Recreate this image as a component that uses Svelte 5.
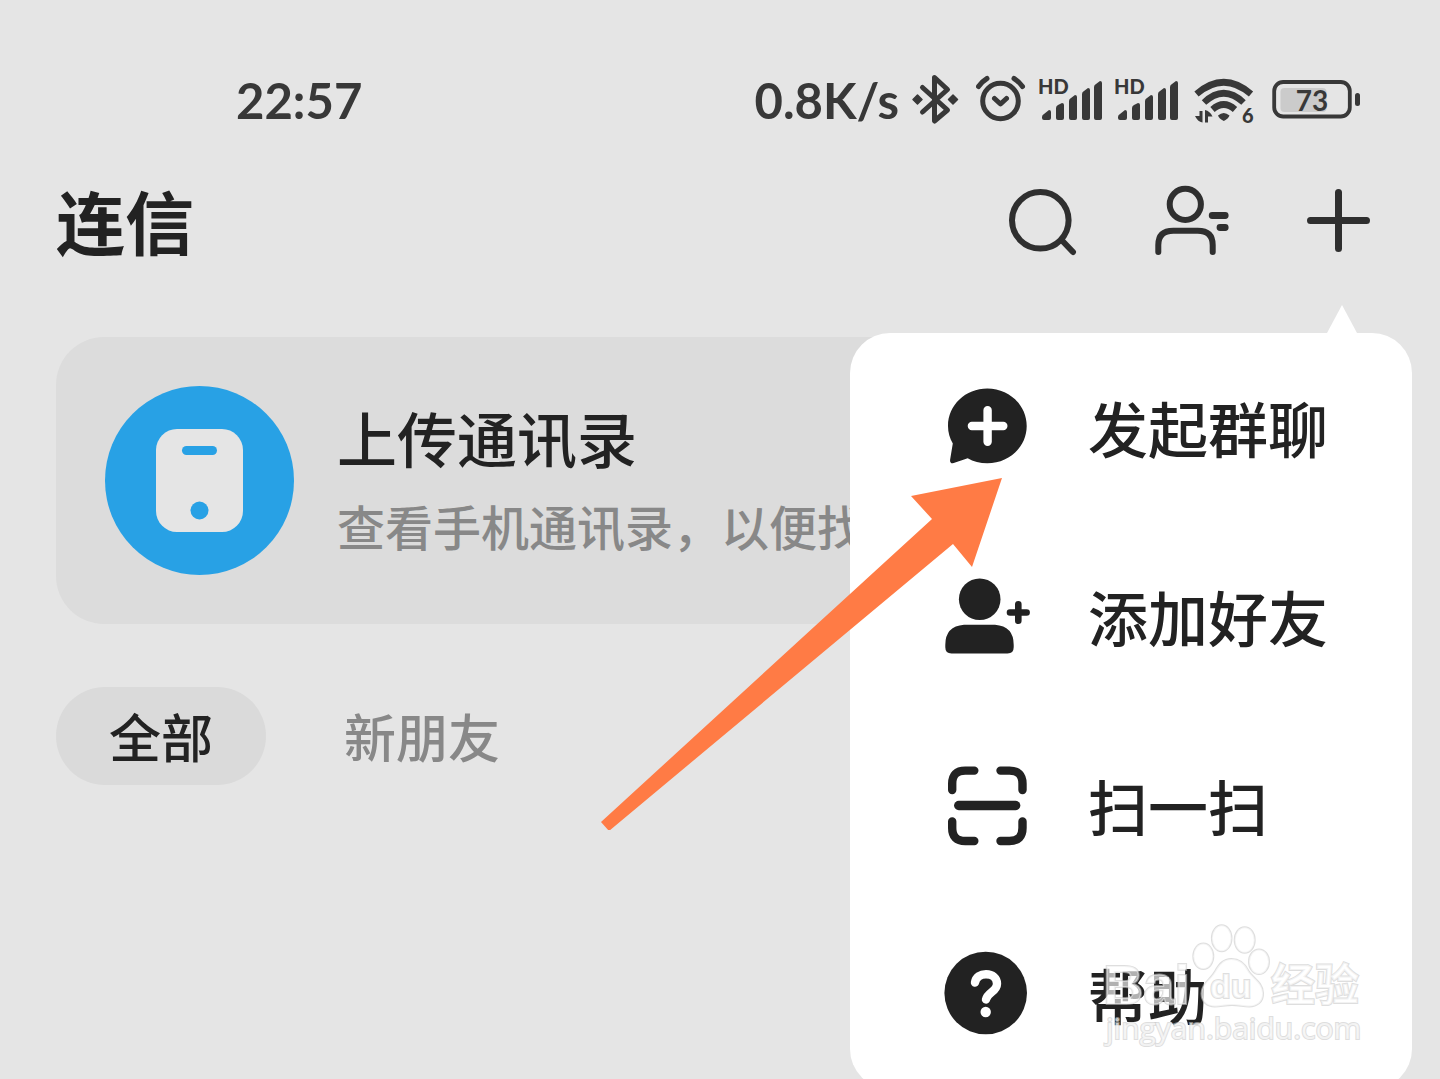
<script>
    let activeTab = $state("all");

    const tabs = [
        { id: "all", label: "全部" },
        { id: "new", label: "新朋友" },
    ];

    const menuItems = [
        { id: "group", label: "发起群聊" },
        { id: "friend", label: "添加好友" },
        { id: "scan", label: "扫一扫" },
        { id: "help", label: "帮助" },
    ];
</script>

{#snippet signal()}
    <svg width="64" height="56" viewBox="0 0 64 56" aria-hidden="true">
        <text class="hd" x="-1" y="22">HD</text>
        <g class="solid">
            <path d="M3 45q0-2 2-3l5-4q2 0 2 2v6q0 2-2 2H5q-2 0-2-2z" />
            <path d="M17 36q0-2 2-3l4-2q2 0 2 2v13q0 2-2 2h-4q-2 0-2-2z" />
            <path d="M30 29q0-2 2-3l4-3q2 0 2 2v21q0 2-2 2h-4q-2 0-2-2z" />
            <path d="M43 22q0-2 2-3l4-3q2 0 2 2v28q0 2-2 2h-4q-2 0-2-2z" />
            <path d="M55 15q0-2 2-3l4-3q2 0 2 2v35q0 2-2 2h-4q-2 0-2-2z" />
        </g>
    </svg>
{/snippet}

<div class="page">
    <div class="status-bar">
        <span class="time">22:57</span>
        <div class="indicators">
            <span>0.8K/s</span>
            <svg width="53" height="56" viewBox="0 0 53 56" aria-hidden="true">
                <path class="line" stroke-width="5" d="M11.5 15.5 36.5 38 23.5 49V5.500L36.500 17.500 11.500 40" />
                <path class="solid" d="M6.500 23 11 27.500 6.500 32 2 27.500zM42 23l4.500 4.500L42 32l-4.500-4.500z" stroke="#383838" stroke-width="1.500" stroke-linejoin="round" />
            </svg>
            <svg width="51" height="56" viewBox="0 0 51 56" aria-hidden="true">
                <circle class="line" cx="24.500" cy="29" r="17.800" stroke-width="5" />
                <path class="line" stroke-width="5" d="m18.500 26.500 6 5.500 6-5.500M2.500 14.500Q6 9.500 11 6.500M38 6.500q5 3 8.500 8" />
            </svg>
            {@render signal()}
            {@render signal()}
            <svg width="65" height="56" viewBox="0 0 65 56" aria-hidden="true">
                <g class="line wifi" stroke-width="6.500">
                    <path d="M5.500 22Q32.700-1.500 60 22" />
                    <path d="M13 30.500Q32.700 12 52.500 30.500" />
                    <path d="M21.500 37.500Q32.700 27.500 44 37.500" />
                </g>
                <path class="solid" d="M27 43.500q5.700-5 11.500 0-1 3-5.700 5.500-4.800-2.500-5.800-5.500z" />
                <path class="solid" d="M8.500 39h3v11.500q-5-1-7.500-6.500h4.500zM14 50.500V38q5 1 7.500 6.500H17v6z" />
                <text class="wifi-gen" x="51" y="51">6</text>
            </svg>
            <svg width="92" height="56" viewBox="0 0 92 56" aria-hidden="true">
                <rect x="12.500" y="16" width="46" height="24" rx="4" fill="#cbcbcb" />
                <rect class="line" x="6.200" y="10" width="75.600" height="34.500" rx="9" stroke-width="3.800" />
                <rect class="solid" x="87" y="21" width="5" height="13" rx="2.500" />
                <text class="battery" x="44" y="38.500">73</text>
            </svg>
        </div>
    </div>

    <header>
        <h1>连信</h1>
        <nav>
            <button aria-label="搜索">
                <svg width="80" height="80" viewBox="0 0 80 80">
                    <g class="tool" stroke-width="6">
                        <circle cx="38.300" cy="38.300" r="28.300" />
                        <path d="m60 58.500 11 11.500" />
                    </g>
                </svg>
            </button>
            <button aria-label="联系人">
                <svg width="80" height="80" viewBox="0 0 80 80">
                    <g class="tool" stroke-width="6">
                        <circle cx="35.300" cy="22.300" r="15.600" />
                        <path d="M8.300 70v-7q0-14.300 15-14.300h24.400q15 0 15 14.300v7" />
                        <path stroke-width="6.800" d="M62.200 33.500h13M70 45.500h5.200" />
                    </g>
                </svg>
            </button>
            <button aria-label="更多">
                <svg width="80" height="80" viewBox="0 0 80 80">
                    <path class="tool" stroke-width="7" d="M12.500 38.500h56M40.500 10.500v56" />
                </svg>
            </button>
        </nav>
    </header>

    <main>
        <section class="card">
            <svg width="189" height="189" viewBox="0 0 189 189" aria-hidden="true">
                <circle cx="94.500" cy="94.500" r="94.500" fill="#28a1e5" />
                <rect x="51" y="43" width="87" height="103" rx="21" fill="#e5e5e5" />
                <rect x="77" y="60" width="35" height="9" rx="4.500" fill="#28a1e5" />
                <circle cx="94.500" cy="124.500" r="9" fill="#28a1e5" />
            </svg>
            <div class="card-text">
                <h2>上传通讯录</h2>
                <p>查看手机通讯录，以便找</p>
            </div>
        </section>

        <div class="tabs">
            {#each tabs as tab (tab.id)}
                <button class:active={activeTab === tab.id} onclick={() => (activeTab = tab.id)}>
                    {tab.label}
                </button>
            {/each}
        </div>
    </main>

    <div class="menu">
        {#each menuItems as item (item.id)}
            <button>
                <svg width="88" height="88" viewBox="0 0 88 88" aria-hidden="true">
                    {#if item.id === "group"}
                        <path fill="#222" d="M44.300 5.500C66 5.500 83.700 22 83.700 43S66 80.300 44.300 80.300c-7.300 0-14-1.800-19.600-5l-14 4.800q-4 .8-3.600-3.400L9.800 60.500C6.800 55.500 5 49.500 5 43 5 22 22.600 5.500 44.300 5.500z" />
                        <path stroke="#fff" stroke-width="8.400" stroke-linecap="round" d="M28.900 43h31.400M44.600 27.300v31.400" />
                    {:else if item.id === "friend"}
                        <circle fill="#222" cx="36.700" cy="27.200" r="20.800" />
                        <path fill="#222" d="M21 52.800h31q18.700 1.500 18.700 20v2.500q0 6.200-6.200 6.200h-56q-6.200 0-6.200-6.200v-2.500q0-18.500 18.700-20z" />
                        <path stroke="#222" stroke-width="6.600" stroke-linecap="round" d="M67 40.500h16.600M75.300 32.200v16.600" />
                    {:else if item.id === "scan"}
                        <g fill="none" stroke="#222" stroke-width="8.400" stroke-linecap="round">
                            <path d="M31.300 9.600h-9.100Q9.200 9.600 9.200 22.600v6.500M57.500 9.600h9q13 0 13 13v6.500M9.200 60.500V67q0 13 13 13h9.100M57.500 80h9q13 0 13-13v-6.500" />
                            <path stroke-width="9.500" d="M15.800 44.500h56.800" />
                        </g>
                    {:else}
                        <circle fill="#222" cx="42.700" cy="43" r="41.300" />
                        <path fill="none" stroke="#fff" stroke-width="8.400" stroke-linecap="round" d="M32 32.500c1-5.500 5.500-8.300 11-8.300 6.500 0 11 3.800 11 9.500 0 8-9.500 8.500-11 15.800" />
                        <circle fill="#fff" cx="42.700" cy="62" r="5.200" />
                    {/if}
                </svg>
                <span>{item.label}</span>
            </button>
        {/each}
    </div>

    <svg class="arrow" width="402" height="354" viewBox="0 0 402 354" aria-hidden="true">
        <path fill="#ff7b45" d="M402 2 311 20l21 23L1 346l8 9L353 68l19 23z" />
    </svg>

    <svg class="watermark" width="270" height="130" viewBox="0 0 270 130">
        <g class="stamp">
            <text class="bai" x="3" y="84">Bai</text>
            <ellipse cx="121.700" cy="18.300" rx="9.800" ry="13" />
            <ellipse cx="144.700" cy="20" rx="10" ry="12.800" />
            <ellipse cx="103.300" cy="36.300" rx="10" ry="12.800" />
            <ellipse cx="159" cy="41.700" rx="10" ry="12.300" />
            <path d="M131.500 39c9 0 14 6 17 12 4 7 14 11 14.500 22 .4 9-6 13.500-14 13.500-6 0-10-1.500-17-1.500s-11 1.500-17 1.500c-8 0-13.500-5-13.500-13 0-10 9-14 13.500-22 4-7 8-12.500 16.500-12.500z" />
            <text class="du" x="110" y="78">du</text>
            <text class="jy" x="171" y="81">经验</text>
            <text class="url" x="6" y="119">jingyan.baidu.com</text>
        </g>
    </svg>
</div>

<style>
    :global(body) {
        margin: 0;
        background: #e5e5e5;
    }

    .page {
        position: relative;
        box-sizing: border-box;
        height: 100vh;
        padding-top: 72px;
        overflow: hidden;
        font-family: "Noto Sans CJK SC", sans-serif;
        color: #222;
    }

    button {
        padding: 0;
        border: none;
        background: none;
        font: inherit;
        color: inherit;
        cursor: pointer;
    }

    svg {
        display: block;
        flex-shrink: 0;
    }

    h1,
    h2,
    p {
        margin: 0;
    }

    .status-bar {
        display: flex;
        justify-content: space-between;
        align-items: center;
        padding: 0 80px 0 236px;
        font-family: Lato, sans-serif;
        font-size: 49px;
        font-weight: 700;
        line-height: 56px;
        color: #383838;
    }

    .indicators {
        display: flex;
        align-items: center;
        gap: 12px;
    }

    .line {
        fill: none;
        stroke: #383838;
        stroke-linecap: round;
        stroke-linejoin: round;
    }

    .wifi {
        stroke-linecap: butt;
    }

    .solid,
    .status-bar text {
        fill: #383838;
    }

    .hd,
    .wifi-gen {
        font-size: 20px;
        font-weight: 900;
    }

    .battery {
        font-size: 28px;
        text-anchor: middle;
    }

    header {
        display: flex;
        justify-content: space-between;
        align-items: center;
        height: 188px;
        padding: 0 62px 0 56px;
    }

    h1 {
        padding-bottom: 4px;
        font-size: 69px;
        font-weight: 700;
        line-height: 80px;
    }

    nav {
        display: flex;
        gap: 68px;
    }

    .tool {
        fill: none;
        stroke: #2f2f2f;
        stroke-linecap: round;
    }

    main {
        padding: 21px 56px 0;
    }

    .card {
        display: flex;
        align-items: center;
        gap: 43px;
        padding: 49px;
        border-radius: 48px;
        background: #dcdcdc;
    }

    .card-text {
        min-width: 0;
        white-space: nowrap;
    }

    h2 {
        font-size: 60px;
        font-weight: 500;
        line-height: 86px;
    }

    p {
        padding-top: 2px;
        font-size: 48px;
        font-weight: 500;
        line-height: 86px;
        color: #888;
    }

    .tabs {
        display: flex;
        gap: 78px;
        margin-top: 63px;
        font-size: 52px;
        font-weight: 500;
        line-height: 98px;
        color: #888;
    }

    .tabs .active {
        padding: 0 53px;
        border-radius: 49px;
        background: #dadada;
        color: #222;
    }

    .menu {
        position: absolute;
        top: 333px;
        right: 28px;
        display: flex;
        flex-direction: column;
        width: 562px;
        border-radius: 40px;
        background: #fff;
    }

    .menu::before {
        content: "";
        position: absolute;
        right: 55px;
        bottom: 100%;
        border: 15px solid transparent;
        border-top: none;
        border-bottom: 28px solid #fff;
    }

    .menu button {
        display: flex;
        align-items: center;
        gap: 57px;
        height: 189px;
        padding: 0 0 2px 93px;
        font-size: 60px;
        font-weight: 500;
    }

    .arrow {
        position: absolute;
        top: 476px;
        right: 438px;
    }

    .watermark {
        position: absolute;
        top: 920px;
        right: 70px;
        overflow: visible;
    }

    .stamp {
        fill: rgba(255, 255, 255, 0.65);
        stroke: rgba(200, 200, 200, 0.6);
        stroke-width: 2px;
        paint-order: stroke;
    }

    .bai,
    .du,
    .jy {
        font-family: "Liberation Sans", "Noto Sans CJK SC", sans-serif;
        font-weight: 700;
    }

    .bai {
        font-size: 56px;
    }

    .du {
        font-size: 34px;
    }

    .jy {
        font-size: 44px;
    }

    .url {
        font-family: "Open Sans", sans-serif;
        font-size: 30px;
    }
</style>
